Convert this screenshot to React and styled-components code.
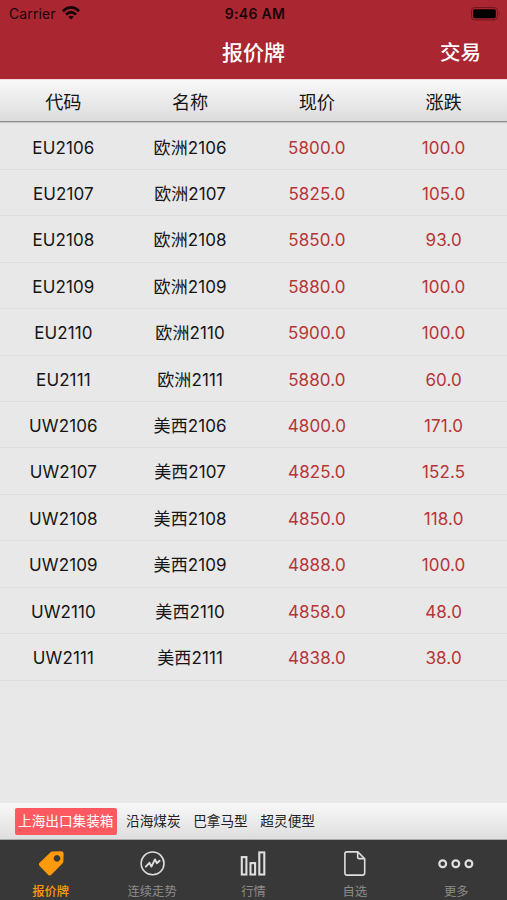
import React from "react";
import styled, { createGlobalStyle, ThemeProvider } from "styled-components";

const theme = {
	mainColor: "#aa2630",
	riseColor: "#b73437",
	activeColor: "#ff9a0c",
	barColor: "#383838",
};

const quoteList = [
	{ code: "EU2106", name: "欧洲2106", price: "5800.0", change: "100.0" },
	{ code: "EU2107", name: "欧洲2107", price: "5825.0", change: "105.0" },
	{ code: "EU2108", name: "欧洲2108", price: "5850.0", change: "93.0" },
	{ code: "EU2109", name: "欧洲2109", price: "5880.0", change: "100.0" },
	{ code: "EU2110", name: "欧洲2110", price: "5900.0", change: "100.0" },
	{ code: "EU2111", name: "欧洲2111", price: "5880.0", change: "60.0" },
	{ code: "UW2106", name: "美西2106", price: "4800.0", change: "171.0" },
	{ code: "UW2107", name: "美西2107", price: "4825.0", change: "152.5" },
	{ code: "UW2108", name: "美西2108", price: "4850.0", change: "118.0" },
	{ code: "UW2109", name: "美西2109", price: "4888.0", change: "100.0" },
	{ code: "UW2110", name: "美西2110", price: "4858.0", change: "48.0" },
	{ code: "UW2111", name: "美西2111", price: "4838.0", change: "38.0" },
];

const categoryList = ["上海出口集装箱", "沿海煤炭", "巴拿马型", "超灵便型"];

const TagIcon = () => (
	<svg width="26" height="26" viewBox="0 0 26 26">
		<path
			fill="currentColor"
			fillRule="evenodd"
			d="M14.6 1.5 L23 1.3 Q25.6 1.2 25.6 3.6 L25.4 11.2 Q25.3 12.6 24.4 13.6 L13.6 24.6 Q11.6 26.4 9.8 24.6 L1.6 16 Q0 14 1.9 12.5 L12.3 2.5 Q13.3 1.6 14.6 1.5Z M19 5.1 a3.3 3.3 0 1 0 .01 0Z"
		/>
	</svg>
);

const TrendIcon = () => (
	<svg width="26" height="26" viewBox="0 0 26 26" fill="none" stroke="currentColor">
		<circle cx="13.6" cy="13.4" r="11.4" strokeWidth="1.6" />
		<path
			strokeWidth="1.9"
			strokeLinecap="round"
			strokeLinejoin="round"
			d="M6.8 16.6 L10.4 12.8 L12.4 16.6 L16 9.4 L17.8 13.2 L20.6 10.8"
		/>
	</svg>
);

const BarsIcon = () => (
	<svg width="26" height="26" viewBox="0 0 26 26" fill="none" stroke="currentColor" strokeWidth="2.1">
		<rect x="1.8" y="7.1" width="4.6" height="17.4" />
		<rect x="10.5" y="13.1" width="4.6" height="11.4" />
		<rect x="19.3" y="2.4" width="5" height="22.1" />
	</svg>
);

const FileIcon = () => (
	<svg width="26" height="26" viewBox="0 0 26 26" fill="none" stroke="currentColor" strokeWidth="1.6" strokeLinejoin="round">
		<path d="M4.9 1.9 H15.8 L22.7 8.8 V23.1 Q22.7 25.1 20.7 25.1 H4.9 Q2.9 25.1 2.9 23.1 V3.9 Q2.9 1.9 4.9 1.9Z" />
		<path d="M15.7 2.1 V6.9 Q15.7 8.6 17.4 8.6 H22.5" />
	</svg>
);

const MoreIcon = () => (
	<svg width="36" height="26" viewBox="0 0 36 26" fill="none" stroke="currentColor" strokeWidth="2.2">
		<circle cx="4.7" cy="13.7" r="3.4" />
		<circle cx="17.8" cy="13.7" r="3.4" />
		<circle cx="30.9" cy="13.7" r="3.4" />
	</svg>
);

const tabList = [
	{ label: "报价牌", Icon: TagIcon },
	{ label: "连续走势", Icon: TrendIcon },
	{ label: "行情", Icon: BarsIcon },
	{ label: "自选", Icon: FileIcon },
	{ label: "更多", Icon: MoreIcon },
];

function App() {
	return (
		<ThemeProvider theme={theme}>
			<GlobalStyle />
			<Screen>
				<TopBar>
					<StatusBar>
						<div className="carrier">
							Carrier
							<svg width="18" height="14" viewBox="0 0 18 14" fill="none" stroke="#16060a" strokeWidth="2.7">
								<path d="M.9 5.2 Q9 -2.3 17.1 5.2" />
								<path d="M4 8.5 Q9 4 14 8.5" />
								<path d="M6.3 10.8 Q9 8.6 11.7 10.8 L9 13.6Z" fill="#16060a" stroke="none" />
							</svg>
						</div>
						<strong>9:46 AM</strong>
						<div className="battery">
							<svg width="30" height="14" viewBox="0 0 30 14">
								<rect x=".5" y=".5" width="26" height="12.4" rx="3.2" fill="none" stroke="#73151e" />
								<rect x="2.2" y="2.2" width="22.6" height="9" rx="1.6" fill="#000" />
								<path d="M28 5 Q29.6 6.7 28 8.4Z" fill="#73151e" />
							</svg>
						</div>
					</StatusBar>
					<NavBar>
						<h1>报价牌</h1>
						<button type="button">交易</button>
					</NavBar>
				</TopBar>
				<TableHead>
					<span>代码</span>
					<span>名称</span>
					<span>现价</span>
					<span>涨跌</span>
				</TableHead>
				<QuoteList>
					{quoteList.map((quote) => (
						<QuoteRow key={quote.code}>
							<Cell>{quote.code}</Cell>
							<Cell>{quote.name}</Cell>
							<Cell $rise>{quote.price}</Cell>
							<Cell $rise>{quote.change}</Cell>
						</QuoteRow>
					))}
				</QuoteList>
				<CategoryBar>
					{categoryList.map((name, idx) => (
						<Category key={name} $active={idx === 0}>
							{name}
						</Category>
					))}
				</CategoryBar>
				<TabBar>
					{tabList.map(({ label, Icon }, idx) => (
						<Tab key={label} $active={idx === 0}>
							<Icon />
							<span>{label}</span>
						</Tab>
					))}
				</TabBar>
			</Screen>
		</ThemeProvider>
	);
}

const GlobalStyle = createGlobalStyle`
	* {
		box-sizing: border-box;
	}
	body {
		margin: 0;
		font-family: Inter, "Noto Sans CJK SC", sans-serif;
	}
`;

const Screen = styled.div`
	display: flex;
	flex-direction: column;
	height: 100vh;
	overflow: hidden;
	background-color: #e8e8e8;
	color: #151515;
`;

const TopBar = styled.header`
	flex: none;
	height: 79px;
	background-color: ${(props) => props.theme.mainColor};
`;

const StatusBar = styled.div`
	display: grid;
	grid-template-columns: 1fr auto 1fr;
	align-items: center;
	height: 27px;
	padding: 0 6px 0 9px;
	color: #16060a;
	font-size: 14px;
	line-height: 27px;
	.carrier {
		display: flex;
		align-items: center;
		gap: 6px;
		letter-spacing: 0.1px;
		svg {
			margin-top: -2px;
		}
	}
	strong {
		font-weight: 600;
		font-size: 14px;
		letter-spacing: 0.3px;
	}
	.battery {
		display: flex;
		justify-content: flex-end;
	}
`;

const NavBar = styled.div`
	display: grid;
	grid-template-columns: 1fr auto 1fr;
	align-items: center;
	height: 52px;
	padding: 0 26px;
	color: #fff;
	h1 {
		grid-column: 2;
		margin: 0;
		font-size: 21px;
		font-weight: 500;
		line-height: 52px;
	}
	button {
		justify-self: end;
		padding: 0;
		border: 0;
		background: none;
		color: inherit;
		font-family: inherit;
		font-size: 20.5px;
		font-weight: 500;
		line-height: 52px;
	}
`;

const TableHead = styled.div`
	flex: none;
	display: grid;
	grid-template-columns: repeat(4, 1fr);
	height: 43px;
	border-top: 1px solid #f3d9db;
	border-bottom: 1px solid #8c8c8c;
	background: linear-gradient(#f9f9f9, #dcdcdc);
	box-shadow: 0 1px 1px rgba(0, 0, 0, 0.12);
	font-size: 18.2px;
	line-height: 44px;
	text-align: center;
`;

const QuoteList = styled.div`
	flex: 1;
	padding-top: 1.5px;
`;

const QuoteRow = styled.div`
	display: grid;
	grid-template-columns: repeat(4, 1fr);
	height: 46.43px;
	border-bottom: 1px solid #dedede;
`;

const Cell = styled.span`
	color: ${(props) => (props.$rise ? props.theme.riseColor : "inherit")};
	font-size: 17px;
	letter-spacing: 0.1px;
	line-height: 49px;
	text-align: center;
`;

const CategoryBar = styled.div`
	flex: none;
	display: flex;
	align-items: center;
	height: 37px;
	padding: 1px 0 0 15px;
	border-bottom: 1px solid #aaa;
	background: linear-gradient(#f8f8f8, #dedede);
`;

const Category = styled.span`
	height: 27px;
	margin-right: ${(props) => (props.$active ? "9.5px" : "12.6px")};
	padding: ${(props) => (props.$active ? "0 3px" : "0")};
	border-radius: 2px;
	background-color: ${(props) => (props.$active ? "#fc5a60" : "transparent")};
	color: ${(props) => (props.$active ? "#fff" : "#222")};
	font-size: 13.65px;
	line-height: 27px;
	white-space: nowrap;
`;

const TabBar = styled.nav`
	flex: none;
	display: grid;
	grid-template-columns: repeat(5, 1fr);
	height: 60px;
	background-color: ${(props) => props.theme.barColor};
`;

const Tab = styled.div`
	display: flex;
	flex-direction: column;
	align-items: center;
	padding-top: 10px;
	color: ${(props) => (props.$active ? props.theme.activeColor : "#dedede")};
	span {
		margin-top: 7px;
		color: ${(props) => (props.$active ? "inherit" : "#8c8c8c")};
		font-size: 12.3px;
		font-weight: ${(props) => (props.$active ? 500 : 400)};
		line-height: 18px;
	}
`;

export default App;
